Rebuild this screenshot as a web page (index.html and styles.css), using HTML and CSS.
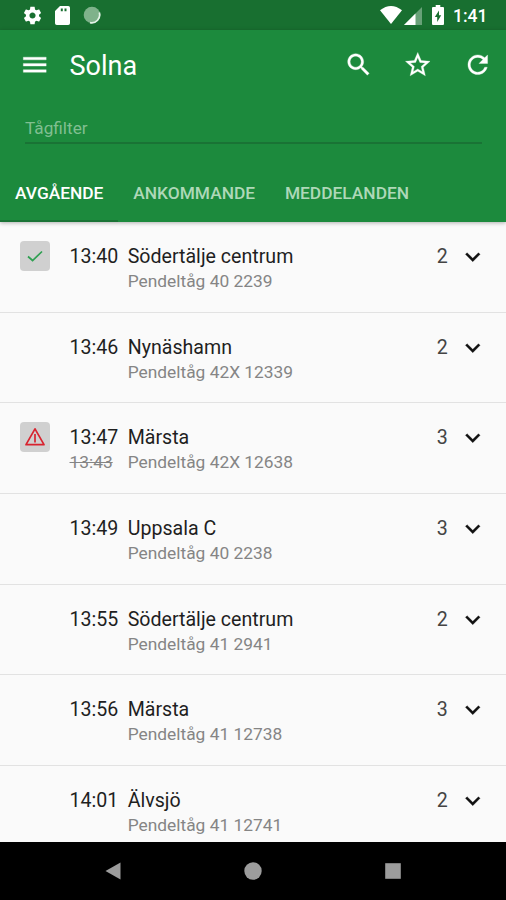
FILE: index.html
```html
<!DOCTYPE html>
<html lang="sv">
<head>
<meta charset="utf-8">
<title>Solna</title>
<link rel="stylesheet" href="styles.css">
</head>
<body>
<svg class="defs" width="0" height="0"><symbol id="chevron" viewBox="0 0 24 24"><path d="M7.41 7.84 12 12.42l4.59-4.58L18 9.25l-6 6-6-6z"/></symbol></svg>
<div class="status">
  <svg class="gear" viewBox="0 0 24 24"><path d="M19.43 12.98c.04-.32.07-.64.07-.98s-.03-.66-.07-.98l2.11-1.65c.19-.15.24-.42.12-.64l-2-3.46c-.12-.22-.39-.3-.61-.22l-2.49 1c-.52-.4-1.08-.73-1.69-.98l-.38-2.65C14.46 2.18 14.25 2 14 2h-4c-.25 0-.46.18-.49.42l-.38 2.65c-.61.25-1.17.59-1.69.98l-2.49-1c-.23-.09-.49 0-.61.22l-2 3.46c-.13.22-.07.49.12.64l2.11 1.65c-.04.32-.07.65-.07.98s.03.66.07.98l-2.11 1.65c-.19.15-.24.42-.12.64l2 3.46c.12.22.39.3.61.22l2.49-1c.52.4 1.08.73 1.69.98l.38 2.65c.03.24.24.42.49.42h4c.25 0 .46-.18.49-.42l.38-2.65c.61-.25 1.17-.59 1.69-.98l2.49 1c.23.09.49 0 .61-.22l2-3.46c.12-.22.07-.49-.12-.64l-2.11-1.65zM12 15.5c-1.93 0-3.5-1.57-3.5-3.5s1.57-3.5 3.5-3.5 3.5 1.57 3.5 3.5-1.57 3.5-3.5 3.5z"/></svg>
  <svg class="card" viewBox="0 0 15 19"><path fill-rule="evenodd" d="M5 0h8.200q1.800 0 1.800 1.800v15.400q0 1.800-1.800 1.800h-11.400q-1.800 0-1.800-1.800V5zM5.800 2.600v2.600h2v-2.600zm3.700 0v2.600h2v-2.600z"/></svg>
  <svg class="sync" viewBox="0 0 18 18"><circle cx="9" cy="9" r="8.300" fill="#7fb28b"/><path d="M16.300 6.500A8 8 0 0 1 7 16.700" fill="none" stroke="#e5f3e8" stroke-width="1.700"/></svg>
  <span class="grow"></span>
  <svg class="wifi" viewBox="0 0 22 18"><path d="M0 4.300Q11-4.300 22 4.300L11 18z"/></svg>
  <svg class="signal" viewBox="0 0 18 18"><path d="M18 0v18H0z" opacity=".35"/><path d="M11.500 6.500V18H0z"/></svg>
  <svg class="battery" viewBox="0 0 12 20"><path fill-rule="evenodd" d="M3.700 0h4.600v2H11q1 0 1 1v16q0 1-1 1H1q-1 0-1-1V3q0-1 1-1h2.700zM7 5.500 2.800 12H5.200v5L9.200 10.300H7z"/></svg>
  <span class="clock">1:41</span>
</div>
<header class="header">
  <div class="toolbar">
    <svg class="icon menu" viewBox="0 0 24 24"><path d="M2.700 18.200h18.600v-2.200H2.700zm0-5.100h18.600v-2.200H2.700zm0-7.300V8h18.600V5.800z"/></svg>
    <h1 class="title">Solna</h1>
    <svg class="icon" viewBox="0 0 24 24"><path d="M15.500 14h-.79l-.28-.27C15.410 12.590 16 11.110 16 9.500 16 5.910 13.090 3 9.500 3S3 5.910 3 9.500 5.910 16 9.500 16c1.610 0 3.090-.59 4.230-1.570l.27.28v.79l5 4.990L20.490 19l-4.990-5zm-6 0C7.010 14 5 11.990 5 9.500S7.010 5 9.500 5 14 7.010 14 9.500 11.990 14 9.500 14z"/></svg>
    <svg class="icon" viewBox="0 0 24 24"><path d="M22 9.240l-7.190-.62L12 2 9.190 8.630 2 9.240l5.460 4.730L5.820 21 12 17.270 18.180 21l-1.630-7.030L22 9.240zM12 15.400l-3.760 2.270 1-4.280-3.320-2.880 4.380-.38L12 6.100l1.710 4.040 4.380.38-3.320 2.880 1 4.280L12 15.400z"/></svg>
    <svg class="icon" viewBox="0 0 24 24"><path d="M17.650 6.350C16.200 4.900 14.210 4 12 4c-4.420 0-7.990 3.580-7.990 8s3.570 8 7.990 8c3.730 0 6.840-2.550 7.730-6h-2.080c-.82 2.330-3.040 4-5.650 4-3.310 0-6-2.690-6-6s2.690-6 6-6c1.660 0 3.140.69 4.220 1.780L13 11h7V4l-2.350 2.350z"/></svg>
  </div>
  <div class="filter">Tågfilter</div>
  <nav class="tabs">
    <span class="tab active">AVGÅENDE</span>
    <span class="tab">ANKOMMANDE</span>
    <span class="tab">MEDDELANDEN</span>
  </nav>
</header>
<main class="list">
  <div class="row">
    <div class="state"><span class="badge"><svg viewBox="0 0 30 30"><path d="M8 15.500 12.600 19.500 22 10.500" fill="none" stroke="#2fa052" stroke-width="1.700"/></svg></span></div>
    <div class="times"><div class="time">13:40</div></div>
    <div class="info"><div class="place">Södertälje centrum</div><div class="train">Pendeltåg 40 2239</div></div>
    <div class="track">2</div><svg class="chevron"><use href="#chevron"/></svg>
  </div>
  <div class="row">
    <div class="state"></div>
    <div class="times"><div class="time">13:46</div></div>
    <div class="info"><div class="place">Nynäshamn</div><div class="train">Pendeltåg 42X 12339</div></div>
    <div class="track">2</div><svg class="chevron"><use href="#chevron"/></svg>
  </div>
  <div class="row">
    <div class="state"><span class="badge"><svg viewBox="0 0 30 30"><path d="M15 6.800 24 22.700H6zM15 12v8.500" fill="none" stroke="#d8232f" stroke-width="1.700" stroke-linejoin="round"/></svg></span></div>
    <div class="times"><div class="time">13:47</div><div class="old">13:43</div></div>
    <div class="info"><div class="place">Märsta</div><div class="train">Pendeltåg 42X 12638</div></div>
    <div class="track">3</div><svg class="chevron"><use href="#chevron"/></svg>
  </div>
  <div class="row">
    <div class="state"></div>
    <div class="times"><div class="time">13:49</div></div>
    <div class="info"><div class="place">Uppsala C</div><div class="train">Pendeltåg 40 2238</div></div>
    <div class="track">3</div><svg class="chevron"><use href="#chevron"/></svg>
  </div>
  <div class="row">
    <div class="state"></div>
    <div class="times"><div class="time">13:55</div></div>
    <div class="info"><div class="place">Södertälje centrum</div><div class="train">Pendeltåg 41 2941</div></div>
    <div class="track">2</div><svg class="chevron"><use href="#chevron"/></svg>
  </div>
  <div class="row">
    <div class="state"></div>
    <div class="times"><div class="time">13:56</div></div>
    <div class="info"><div class="place">Märsta</div><div class="train">Pendeltåg 41 12738</div></div>
    <div class="track">3</div><svg class="chevron"><use href="#chevron"/></svg>
  </div>
  <div class="row">
    <div class="state"></div>
    <div class="times"><div class="time">14:01</div></div>
    <div class="info"><div class="place">Älvsjö</div><div class="train">Pendeltåg 41 12741</div></div>
    <div class="track">2</div><svg class="chevron"><use href="#chevron"/></svg>
  </div>
</main>
<footer class="navbar">
  <svg viewBox="0 0 18 18"><path d="M16.500.5v17L1.500 9z"/></svg>
  <svg viewBox="0 0 18 18"><circle cx="9" cy="9" r="8.700"/></svg>
  <svg viewBox="0 0 18 18"><path d="M1.200 1.200h15.600v15.600H1.200z"/></svg>
</footer>
</body>
</html>
```
FILE: styles.css
```css
* { box-sizing: border-box; }
body {
  margin: 0;
  width: 506px;
  height: 900px;
  display: flex;
  flex-direction: column;
  overflow: hidden;
  background: #fafafa;
  font-family: Roboto, sans-serif;
}
svg { display: block; flex: none; fill: currentColor; }
.defs { position: absolute; }

.status {
  flex: none;
  height: 30px;
  padding: 0 20px 0 22px;
  display: flex;
  align-items: center;
  background: #186f30;
  color: #fff;
}
.gear { width: 21px; height: 21px; }
.card { width: 15px; height: 19px; margin-left: 12px; }
.sync { width: 18px; height: 18px; margin-left: 13px; }
.grow { flex: 1; }
.wifi { width: 22px; height: 18px; }
.signal { width: 18px; height: 18px; margin: 1px 0 0 2px; }
.battery { width: 12px; height: 20px; margin-left: 10px; }
.clock { margin: 2px 0 0 9px; width: 33px; font-size: 17.500px; font-weight: 500; line-height: 22px; white-space: nowrap; }

.header {
  flex: none;
  height: 192px;
  position: relative;
  display: flex;
  flex-direction: column;
  background: #1c8a3d;
  color: #fff;
  box-shadow: 0 1px 4px rgba(0, 0, 0, .3);
}
.toolbar { height: 69px; padding: 0 14px 0 20px; display: flex; align-items: center; gap: 30px; }
.icon { width: 29.500px; height: 29.500px; stroke: currentColor; stroke-width: .25; }
.title { flex: 1; margin: 3px 0 0 -10px; font-size: 27px; line-height: 32px; font-weight: 400; }
.filter {
  height: 45px;
  margin: 0 24px 0 25px;
  padding-top: 18px;
  border-bottom: 2px solid #197335;
  font-size: 17.200px;
  line-height: 22px;
  color: #80bf91;
}
.tabs { flex: 1; display: flex; }
.tab {
  padding: 37px 14.800px 0 15px;
  font-size: 17.350px;
  line-height: 24px;
  font-weight: 500;
  color: #aed8b8;
}
.active { color: #fff; border-bottom: 2px solid #197335; }

.list { flex: 1; min-height: 0; overflow: hidden; }
.row {
  height: 90.700px;
  padding: 23px 19px 0 20px;
  display: flex;
  border-bottom: 1.500px solid #e2e2e2;
  color: #1f1f1f;
  font-size: 19.600px;
  line-height: 24px;
}
.state { width: 49.500px; }
.badge { display: block; width: 30px; height: 30px; margin-top: -4px; border-radius: 4px; background: #d0d0d0; }
.times { width: 58.200px; }
.info { flex: 1; }
.old, .train { font-size: 17.350px; color: #858585; }
.old { text-decoration: line-through; }
.track { width: 20.800px; color: #444; }
.chevron { width: 29.500px; height: 29.500px; margin-top: -2px; color: #111; stroke: currentColor; stroke-width: .2; }

.navbar {
  flex: none;
  height: 58px;
  display: flex;
  justify-content: center;
  align-items: center;
  gap: 122px;
  background: #000;
  color: #9c9c9c;
}
.navbar svg { width: 18px; height: 18px; }
```
